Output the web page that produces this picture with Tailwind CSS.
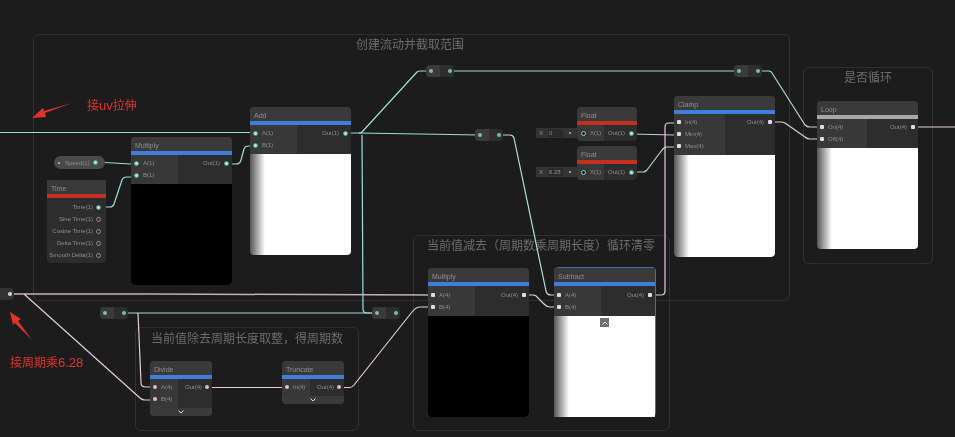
<!DOCTYPE html>
<html lang="zh">

<head>
    <meta charset="UTF-8">
    <meta name="viewport" content="width=device-width,initial-scale=1.0">
    <script src="https://cdn.jsdelivr.net/npm/@tailwindcss/browser@4"></script>
    <title>Shader Graph</title>
</head>

<body class="bg-[#1c1c1d]">
    <div class="relative w-[955px] h-[437px] overflow-hidden bg-[#1c1c1d] blur-[0.35px] font-['Liberation_Sans','Noto_Sans_CJK_SC',sans-serif] text-[6px] leading-3 text-[#8e8e8e]">

        <!-- Groups -->
        <div class="absolute left-[33px] top-[34px] w-[757px] h-[267px] rounded-md border border-[#303031] pr-[3px] text-center text-xs leading-5 text-[#6c6c6c]">创建流动并截取范围</div>
        <div class="absolute left-[803px] top-[67px] w-[130px] h-[197px] rounded-md border border-[#303031] text-center text-xs leading-5 text-[#6c6c6c]">是否循环</div>
        <div class="absolute left-[135px] top-[327px] w-[224px] h-[104px] rounded-md border border-[#303031] pl-[15px] pt-[1px] text-xs leading-5 text-[#6c6c6c]">当前值除去周期长度取整，得周期数</div>
        <div class="absolute left-[413px] top-[235px] w-[257px] h-[196px] rounded-md border border-[#303031] pl-[13px] text-xs leading-5 text-[#6c6c6c]">当前值减去（周期数乘周期长度）循环清零</div>

        <!-- Wires -->
        <svg class="absolute inset-0" width="955" height="437" fill="none" stroke-width="1.2" stroke-linejoin="round">
            <defs>
                <linearGradient id="minWire" gradientUnits="userSpaceOnUse" x1="631" y1="0" x2="674" y2="0">
                    <stop offset="0" stop-color="#9adfd8" />
                    <stop offset="1" stop-color="#dcc3d3" />
                </linearGradient>
                <linearGradient id="maxWire" gradientUnits="userSpaceOnUse" x1="631" y1="0" x2="674" y2="0">
                    <stop offset="0" stop-color="#9adfd8" />
                    <stop offset="1" stop-color="#dcc3d3" />
                </linearGradient>
                <linearGradient id="onWire" gradientUnits="userSpaceOnUse" x1="770" y1="0" x2="822" y2="0">
                    <stop offset="0" stop-color="#9adfd8" />
                    <stop offset="1" stop-color="#dcc3d3" />
                </linearGradient>
            </defs>
            <g stroke="#9adfd8">
                <path d="M0 132.500H256" />
                <path d="M345 133H359Q361 133 362 132L417 72Q418 71 420 71H431" />
                <path d="M359 133L480 135" />
                <path d="M362 135L363 309Q363 313 367 313H377" />
                <path d="M450 71H739" />
                <path d="M499 135H510Q513 135 514 138L546 291Q547 295 551 295H560" stroke="#b5dfdc" />
                <path d="M106 313H377" />
                <path d="M96 162L131 164H136" />
                <path d="M99 207H110Q113 207 114 204L122 180Q123 177 127 177H136" />
                <path d="M226 164H236Q240 164 241 160L244 149Q245 146 249 146H256" />
                <path d="M570 133H583" stroke-width="2" stroke="#6fb5aa" />
                <path d="M570 172H583" stroke-width="2" stroke="#6fb5aa" />
            </g>
            <path d="M631 134L674 135" stroke="url(#minWire)" />
            <path d="M631 172H643Q645 172 647 170L662 150Q664 147 667 147H679" stroke="url(#maxWire)" />
            <path d="M757 71H769Q771 71 772 73L805 125Q807 127 810 127H822" stroke="url(#onWire)" />
            <g stroke="#e3cbdb">
                <path d="M769 122H781Q783 122 785 123L805 137Q807 139 810 139H822" />
                <path d="M912 127H955" />
                <path d="M14 294H150L433 295" stroke="#c5aebd" stroke-width="1.500" />
                <path d="M24 294L140 398Q142 400 145 400H156" />
                <path d="M138 313L141 383Q141 387 146 387H156" />
                <path d="M205 387.500H288" />
                <path d="M338 387.500H350Q352 387.500 354 385L412 312Q416 307 420 307H433" />
                <path d="M523 295H533Q536 295 538 298L544 304Q547 307 550 307H560" />
                <path d="M650 295H661Q665 295 665 291V127Q665 123 669 123H679" />
            </g>
        </svg>

        <!-- Reroutes -->
        <div class="absolute left-0 top-[288px] flex h-3 w-[14px] items-center justify-end rounded-r bg-[#333] pr-[2px]"><span class="size-[4px] rounded-sm bg-[#ddd0d8]"></span></div>
        <div class="absolute left-[426px] top-[65px] flex h-3 w-7 overflow-hidden rounded">
            <div class="flex w-[14px] items-center pl-[3px] bg-[#3a3a3a]"><span class="size-[4px] rounded-full bg-[#6fc0b2]"></span></div>
            <div class="flex w-[14px] items-center justify-end pr-[2px] bg-[#2e2e2e]"><span class="size-[4px] rounded-full bg-[#6fc0b2]"></span></div>
        </div>
        <div class="absolute left-[734px] top-[65px] flex h-3 w-7 overflow-hidden rounded">
            <div class="flex w-[14px] items-center pl-[3px] bg-[#3a3a3a]"><span class="size-[4px] rounded-full bg-[#6fc0b2]"></span></div>
            <div class="flex w-[14px] items-center justify-end pr-[2px] bg-[#2e2e2e]"><span class="size-[4px] rounded-full bg-[#6fc0b2]"></span></div>
        </div>
        <div class="absolute left-[475px] top-[129px] flex h-3 w-7 overflow-hidden rounded">
            <div class="flex w-[14px] items-center pl-[3px] bg-[#3a3a3a]"><span class="size-[4px] rounded-full bg-[#6fc0b2]"></span></div>
            <div class="flex w-[14px] items-center justify-end pr-[2px] bg-[#2e2e2e]"><span class="size-[4px] rounded-full bg-[#6fc0b2]"></span></div>
        </div>
        <div class="absolute left-[100px] top-[307px] flex h-3 w-7 overflow-hidden rounded">
            <div class="flex w-[14px] items-center pl-[3px] bg-[#3a3a3a]"><span class="size-[4px] rounded-full bg-[#6fc0b2]"></span></div>
            <div class="flex w-[14px] items-center justify-end pr-[2px] bg-[#2e2e2e]"><span class="size-[4px] rounded-full bg-[#6fc0b2]"></span></div>
        </div>
        <div class="absolute left-[372px] top-[307px] flex h-3 w-7 overflow-hidden rounded">
            <div class="flex w-[14px] items-center pl-[3px] bg-[#3a3a3a]"><span class="size-[4px] rounded-full bg-[#6fc0b2]"></span></div>
            <div class="flex w-[14px] items-center justify-end pr-[2px] bg-[#2e2e2e]"><span class="size-[4px] rounded-full bg-[#6fc0b2]"></span></div>
        </div>

        <!-- Speed property -->
        <div class="absolute left-[54px] top-[156px] flex h-[13px] w-[51px] items-center rounded-full bg-[#4a4a4a] pl-[4px] pr-[7px]">
            <span class="size-[2px] rounded-full bg-[#a6e08c]"></span>
            <span class="ml-[5px] flex-1">Speed(1)</span>
            <span class="size-[5px] rounded-full border border-[#4f9c8f] bg-[#b5e8df]"></span>
        </div>

        <!-- Time -->
        <div class="absolute left-[47px] top-[180px] w-[59px] rounded-sm bg-[#2d2d2d]">
            <div class="h-[14px] bg-[#3a3a3a] pl-1 text-[7px] leading-[17px]">Time</div>
            <div class="h-1 bg-[#c42f20]"></div>
            <div class="pt-[3px] pb-[2px]">
                <div class="flex h-3 items-center justify-end gap-[3px] pr-[5px]">Time(1)<span class="size-[5px] rounded-full border border-[#4f9c8f] bg-[#b5e8df]"></span></div>
                <div class="flex h-3 items-center justify-end gap-[3px] pr-[5px]">Sine Time(1)<span class="size-[5px] rounded-full border border-[#8e8e8e]"></span></div>
                <div class="flex h-3 items-center justify-end gap-[3px] pr-[5px]">Cosine Time(1)<span class="size-[5px] rounded-full border border-[#8e8e8e]"></span></div>
                <div class="flex h-3 items-center justify-end gap-[3px] pr-[5px]">Delta Time(1)<span class="size-[5px] rounded-full border border-[#8e8e8e]"></span></div>
                <div class="flex h-3 items-center justify-end gap-[3px] pr-[5px]">Smooth Delta(1)<span class="size-[5px] rounded-full border border-[#8e8e8e]"></span></div>
            </div>
        </div>

        <!-- Multiply (uv) -->
        <div class="absolute left-[131px] top-[137px] w-[101px] overflow-hidden rounded-sm bg-[#2d2d2d]">
            <div class="h-[14px] bg-[#3a3a3a] pl-1 text-[7px] leading-[17px]">Multiply</div>
            <div class="h-1 bg-[#3f7fdc]"></div>
            <div class="flex h-[29px]">
                <div class="w-[47px] bg-[#383838] pt-[2px]">
                    <div class="flex h-3 items-center gap-[4px] pl-[3px]"><span class="size-[5px] rounded-full border border-[#4f9c8f] bg-[#b5e8df]"></span>A(1)</div>
                    <div class="flex h-3 items-center gap-[4px] pl-[3px]"><span class="size-[5px] rounded-full border border-[#4f9c8f] bg-[#b5e8df]"></span>B(1)</div>
                </div>
                <div class="flex-1 pt-[2px]">
                    <div class="flex h-3 items-center justify-end gap-[4px] pr-[3px]">Out(1)<span class="size-[5px] rounded-full border border-[#4f9c8f] bg-[#b5e8df]"></span></div>
                </div>
            </div>
            <div class="h-[101px] rounded-b bg-black"></div>
        </div>

        <!-- Add -->
        <div class="absolute left-[250px] top-[107px] w-[101px] overflow-hidden rounded-sm bg-[#2d2d2d]">
            <div class="h-[14px] bg-[#3a3a3a] pl-1 text-[7px] leading-[17px]">Add</div>
            <div class="h-1 bg-[#3f7fdc]"></div>
            <div class="flex h-[29px]">
                <div class="w-[47px] bg-[#383838] pt-[2px]">
                    <div class="flex h-3 items-center gap-[4px] pl-[3px]"><span class="size-[5px] rounded-full border border-[#4f9c8f] bg-[#b5e8df]"></span>A(1)</div>
                    <div class="flex h-3 items-center gap-[4px] pl-[3px]"><span class="size-[5px] rounded-full border border-[#4f9c8f] bg-[#b5e8df]"></span>B(1)</div>
                </div>
                <div class="flex-1 pt-[2px]">
                    <div class="flex h-3 items-center justify-end gap-[4px] pr-[3px]">Out(1)<span class="size-[5px] rounded-full border border-[#4f9c8f] bg-[#b5e8df]"></span></div>
                </div>
            </div>
            <div class="h-[101px] bg-[linear-gradient(90deg,#555,#fff_15px)]"></div>
        </div>

        <!-- Float inputs -->
        <div class="absolute left-[536px] top-[128px] flex h-[10px] w-[41px] items-center bg-[#333] pl-[3px]">
            <span class="w-[9px]">X</span>
            <span class="h-[8px] w-[15px] bg-[#2a2a2a] pl-[1px] leading-[8px]">0</span>
            <span class="ml-[6px] size-[2px] rounded-full bg-[#bbb]"></span>
        </div>
        <div class="absolute left-[536px] top-[167px] flex h-[10px] w-[41px] items-center bg-[#333] pl-[3px]">
            <span class="w-[9px]">X</span>
            <span class="h-[8px] w-[15px] bg-[#2a2a2a] pl-[1px] leading-[8px]">6.28</span>
            <span class="ml-[6px] size-[2px] rounded-full bg-[#bbb]"></span>
        </div>

        <!-- Float -->
        <div class="absolute left-[577px] top-[107px] w-[60px] overflow-hidden rounded-sm bg-[#2d2d2d]">
            <div class="h-[14px] bg-[#3a3a3a] pl-1 text-[7px] leading-[17px]">Float</div>
            <div class="h-1 bg-[#c42f20]"></div>
            <div class="flex h-4">
                <div class="w-[27px] bg-[#383838] pt-[2px]">
                    <div class="flex h-3 items-center gap-[4px] pl-[4px]"><span class="size-[5px] rounded-full border border-[#86d4c9] bg-[#1c1c1d]"></span>X(1)</div>
                </div>
                <div class="flex-1 pt-[2px]">
                    <div class="flex h-3 items-center justify-end gap-[4px] pr-[3px]">Out(1)<span class="size-[5px] rounded-full border border-[#4f9c8f] bg-[#b5e8df]"></span></div>
                </div>
            </div>
        </div>
        <div class="absolute left-[577px] top-[146px] w-[60px] overflow-hidden rounded-sm bg-[#2d2d2d]">
            <div class="h-[14px] bg-[#3a3a3a] pl-1 text-[7px] leading-[17px]">Float</div>
            <div class="h-1 bg-[#c42f20]"></div>
            <div class="flex h-4">
                <div class="w-[27px] bg-[#383838] pt-[2px]">
                    <div class="flex h-3 items-center gap-[4px] pl-[4px]"><span class="size-[5px] rounded-full border border-[#86d4c9] bg-[#1c1c1d]"></span>X(1)</div>
                </div>
                <div class="flex-1 pt-[2px]">
                    <div class="flex h-3 items-center justify-end gap-[4px] pr-[3px]">Out(1)<span class="size-[5px] rounded-full border border-[#4f9c8f] bg-[#b5e8df]"></span></div>
                </div>
            </div>
        </div>

        <!-- Clamp -->
        <div class="absolute left-[674px] top-[96px] w-[101px] overflow-hidden rounded-sm bg-[#2d2d2d]">
            <div class="h-[14px] bg-[#3a3a3a] pl-1 text-[7px] leading-[17px]">Clamp</div>
            <div class="h-1 bg-[#3f7fdc]"></div>
            <div class="flex h-[41px]">
                <div class="w-[51px] bg-[#383838] pt-[2px]">
                    <div class="flex h-3 items-center gap-[4px] pl-[3px]"><span class="size-[4px] rounded-[1px] bg-[#e4dbe0]"></span>In(4)</div>
                    <div class="flex h-3 items-center gap-[4px] pl-[3px]"><span class="size-[4px] rounded-[1px] bg-[#e4dbe0]"></span>Min(4)</div>
                    <div class="flex h-3 items-center gap-[4px] pl-[3px]"><span class="size-[4px] rounded-[1px] bg-[#e4dbe0]"></span>Max(4)</div>
                </div>
                <div class="flex-1 pt-[2px]">
                    <div class="flex h-3 items-center justify-end gap-[4px] pr-[3px]">Out(4)<span class="size-[4px] rounded-[1px] bg-[#e4dbe0]"></span></div>
                </div>
            </div>
            <div class="h-[102px] rounded-b bg-[linear-gradient(90deg,#555,#fff_15px)]"></div>
        </div>

        <!-- Loop -->
        <div class="absolute left-[817px] top-[101px] w-[101px] overflow-hidden rounded-sm bg-[#2d2d2d]">
            <div class="h-[14px] bg-[#3a3a3a] pl-1 text-[7px] leading-[17px]">Loop</div>
            <div class="h-1 bg-[#a8a8a8]"></div>
            <div class="flex h-[29px]">
                <div class="w-[50px] bg-[#383838] pt-[2px]">
                    <div class="flex h-3 items-center gap-[4px] pl-[3px]"><span class="size-[4px] rounded-[1px] bg-[#e4dbe0]"></span>On(4)</div>
                    <div class="flex h-3 items-center gap-[4px] pl-[3px]"><span class="size-[4px] rounded-[1px] bg-[#e4dbe0]"></span>Off(4)</div>
                </div>
                <div class="flex-1 pt-[2px]">
                    <div class="flex h-3 items-center justify-end gap-[4px] pr-[3px]">Out(4)<span class="size-[4px] rounded-[1px] bg-[#e4dbe0]"></span></div>
                </div>
            </div>
            <div class="h-[101px] bg-[linear-gradient(90deg,#555,#fff_15px)]"></div>
        </div>

        <!-- Divide -->
        <div class="absolute left-[150px] top-[361px] w-[62px] overflow-hidden rounded-sm bg-[#2d2d2d]">
            <div class="h-[14px] bg-[#3a3a3a] pl-1 text-[7px] leading-[17px]">Divide</div>
            <div class="h-1 bg-[#3f7fdc]"></div>
            <div class="flex h-[29px]">
                <div class="w-[28px] bg-[#383838] pt-[2px]">
                    <div class="flex h-3 items-center gap-[4px] pl-[3px]"><span class="size-[4px] rounded-full bg-[#e4b8d4]"></span>A(4)</div>
                    <div class="flex h-3 items-center gap-[4px] pl-[3px]"><span class="size-[4px] rounded-full bg-[#e4b8d4]"></span>B(4)</div>
                </div>
                <div class="flex-1 pt-[2px]">
                    <div class="flex h-3 items-center justify-end gap-[3px] pr-[3px]">Out(4)<span class="size-[4px] rounded-full bg-[#e4b8d4]"></span></div>
                </div>
            </div>
            <div class="flex h-2 items-center justify-center bg-[#3a3a3a]">
                <svg width="6" height="4" viewBox="0 0 6 4" fill="none" stroke="#ddd" stroke-width="1"><path d="M.5 .5L3 3L5.500 .5" /></svg>
            </div>
        </div>

        <!-- Truncate -->
        <div class="absolute left-[282px] top-[361px] w-[62px] overflow-hidden rounded-sm bg-[#2d2d2d]">
            <div class="h-[14px] bg-[#3a3a3a] pl-1 text-[7px] leading-[17px]">Truncate</div>
            <div class="h-1 bg-[#3f7fdc]"></div>
            <div class="flex h-[17px]">
                <div class="w-[28px] bg-[#383838] pt-[2px]">
                    <div class="flex h-3 items-center gap-[4px] pl-[3px]"><span class="size-[4px] rounded-full bg-[#e4b8d4]"></span>In(4)</div>
                </div>
                <div class="flex-1 pt-[2px]">
                    <div class="flex h-3 items-center justify-end gap-[3px] pr-[3px]">Out(4)<span class="size-[4px] rounded-full bg-[#e4b8d4]"></span></div>
                </div>
            </div>
            <div class="flex h-2 items-center justify-center bg-[#3a3a3a]">
                <svg width="6" height="4" viewBox="0 0 6 4" fill="none" stroke="#ddd" stroke-width="1"><path d="M.5 .5L3 3L5.500 .5" /></svg>
            </div>
        </div>

        <!-- Multiply (period) -->
        <div class="absolute left-[428px] top-[268px] w-[101px] overflow-hidden rounded-sm bg-[#2d2d2d]">
            <div class="h-[14px] bg-[#3a3a3a] pl-1 text-[7px] leading-[17px]">Multiply</div>
            <div class="h-1 bg-[#3f7fdc]"></div>
            <div class="flex h-[30px]">
                <div class="w-[47px] bg-[#383838] pt-[3px]">
                    <div class="flex h-3 items-center gap-[4px] pl-[3px]"><span class="size-[4px] rounded-[1px] bg-[#e4dbe0]"></span>A(4)</div>
                    <div class="flex h-3 items-center gap-[4px] pl-[3px]"><span class="size-[4px] rounded-[1px] bg-[#e4dbe0]"></span>B(4)</div>
                </div>
                <div class="flex-1 pt-[3px]">
                    <div class="flex h-3 items-center justify-end gap-[4px] pr-[3px]">Out(4)<span class="size-[4px] rounded-[1px] bg-[#e4dbe0]"></span></div>
                </div>
            </div>
            <div class="h-[101px] rounded-b bg-black"></div>
        </div>

        <!-- Subtract -->
        <div class="absolute left-[554px] top-[268px] w-[101px] rounded-sm bg-[#2d2d2d] shadow-[1px_-1px_0_#3f6fae]">
            <div class="h-[14px] bg-[#3a3a3a] pl-1 text-[7px] leading-[17px]">Subtract</div>
            <div class="h-1 bg-[#3f7fdc]"></div>
            <div class="flex h-[30px]">
                <div class="w-[47px] bg-[#383838] pt-[3px]">
                    <div class="flex h-3 items-center gap-[4px] pl-[3px]"><span class="size-[4px] rounded-[1px] bg-[#e4dbe0]"></span>A(4)</div>
                    <div class="flex h-3 items-center gap-[4px] pl-[3px]"><span class="size-[4px] rounded-[1px] bg-[#e4dbe0]"></span>B(4)</div>
                </div>
                <div class="flex-1 pt-[3px]">
                    <div class="flex h-3 items-center justify-end gap-[4px] pr-[3px]">Out(4)<span class="size-[4px] rounded-[1px] bg-[#e4dbe0]"></span></div>
                </div>
            </div>
            <div class="relative h-[101px] bg-[linear-gradient(90deg,#555,#fff_15px)]">
                <div class="absolute left-[46px] top-[2px] flex size-[9px] items-center justify-center bg-[#707070]">
                    <svg width="6" height="4" viewBox="0 0 6 4" fill="none" stroke="#eee" stroke-width="1"><path d="M.5 3.500L3 1L5.500 3.500" /></svg>
                </div>
            </div>
        </div>

        <!-- Annotations -->
        <svg class="absolute inset-0" width="955" height="437" fill="#e0332e">
            <path d="M32 118L43 108L44 111L72 103L45 113L46 117Z" />
            <path d="M10 312L21 319L18 321L32 340L15 323L13 325Z" />
        </svg>
        <span class="absolute left-[87px] top-[98px] text-xs leading-4 text-[#e0332e]">接<span class="text-[13px]">uv</span>拉伸</span>
        <span class="absolute left-[10px] top-[355px] text-xs leading-4 text-[#e0332e]">接周期乘<span class="text-[13px]">6.28</span></span>
    </div>
</body>

</html>
